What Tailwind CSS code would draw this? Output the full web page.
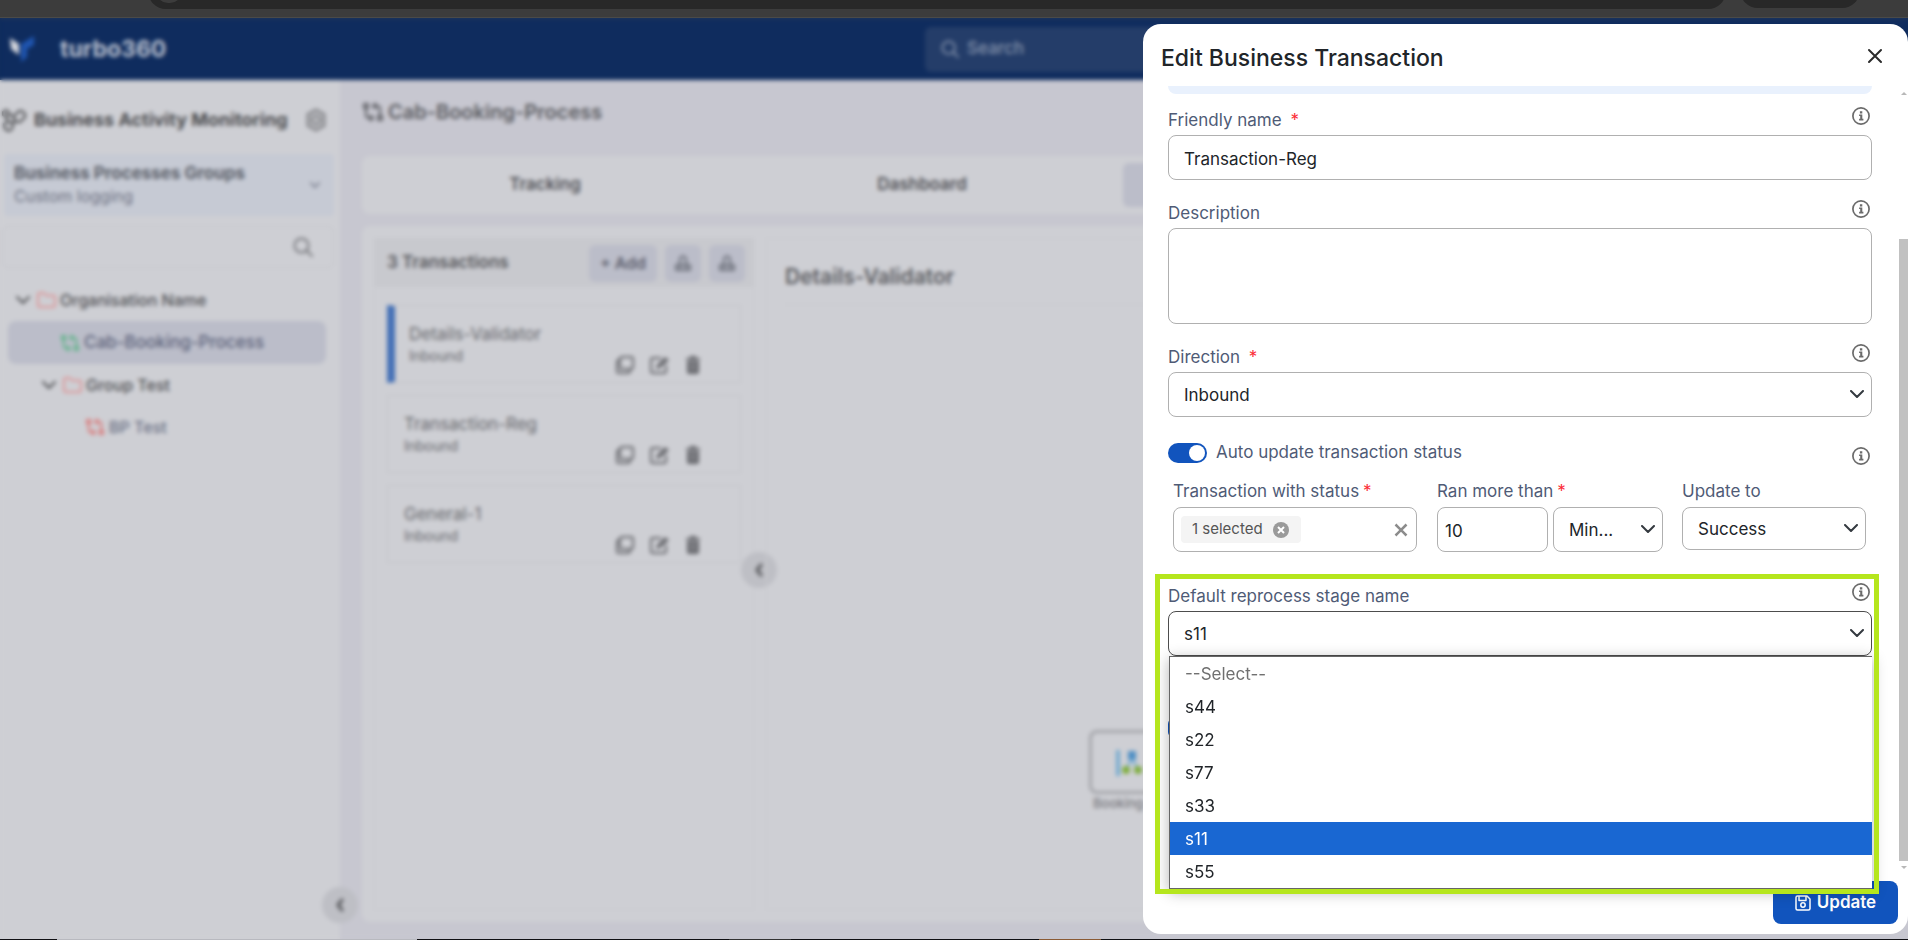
<!DOCTYPE html>
<html lang="en">
<head>
<meta charset="utf-8">
<title>turbo360 - Edit Business Transaction</title>
<script src="https://cdn.jsdelivr.net/npm/@tailwindcss/browser@4"></script>
</head>
<body class="h-screen overflow-hidden flex flex-col bg-[#c7c7d0] font-['Inter',sans-serif] text-[#212529]">

<svg class="hidden" aria-hidden="true">
  <symbol id="process" viewBox="0 0 22 20" fill="none" stroke="currentColor" stroke-width="2" stroke-linejoin="round">
    <path d="M2 2h4v4H2zM16 14h4v4h-4zM4 6v7a3 3 0 0 0 3 3h4M8 13l3 3-3 3M18 14V7a3 3 0 0 0-3-3h-4M14 1l-3 3 3 3"/>
  </symbol>
  <symbol id="folder" viewBox="0 0 20 16" fill="none" stroke="currentColor" stroke-width="2" stroke-linejoin="round">
    <path d="M2 3a2 2 0 0 1 2-2h4l2 2.500h7a2 2 0 0 1 2 2V13a2 2 0 0 1-2 2H4a2 2 0 0 1-2-2z"/>
  </symbol>
  <symbol id="search" viewBox="0 0 20 20" fill="none" stroke="currentColor" stroke-width="2" stroke-linecap="round">
    <circle cx="8.500" cy="8.500" r="7"/><path d="M13.500 13.500l5.500 5.500"/>
  </symbol>
  <symbol id="chevron" viewBox="0 0 14 8" fill="none" stroke="currentColor" stroke-width="2" stroke-linecap="round" stroke-linejoin="round">
    <path d="M1 1l6 6 6-6"/>
  </symbol>
  <symbol id="chevron-left" viewBox="0 0 8 14" fill="none" stroke="currentColor" stroke-width="3" stroke-linecap="round" stroke-linejoin="round">
    <path d="M6 2L2 7l4 5"/>
  </symbol>
  <symbol id="info" viewBox="0 0 18 18">
    <circle cx="9" cy="9" r="8.100" fill="none" stroke="currentColor" stroke-width="1.700"/>
    <path fill="currentColor" d="M7.900 4.300h2.400v2.200H7.900zM7.100 7.400h3.200v4.300h1.100v1.700H7.100v-1.700h1.100V9.100H7.100z"/>
  </symbol>
  <symbol id="copy" viewBox="0 0 18 18" fill="none" stroke="currentColor" stroke-width="2" stroke-linejoin="round">
    <rect x="4" y="1" width="13" height="12" rx="2"/><path d="M4 4H3a2 2 0 0 0-2 2v9a2 2 0 0 0 2 2h9a2 2 0 0 0 2-2v-1"/>
  </symbol>
  <symbol id="edit" viewBox="0 0 20 18" fill="none" stroke="currentColor" stroke-width="2" stroke-linejoin="round">
    <path d="M11 2H3a2 2 0 0 0-2 2v11a2 2 0 0 0 2 2h11a2 2 0 0 0 2-2V9"/><path d="M6 13l1-4 8-8 4 3-9 8z" fill="currentColor" stroke="none"/>
  </symbol>
  <symbol id="trash" viewBox="0 0 14 18">
    <path d="M4 0h6v2h4v2H0V2h4zM1 5h12v11a2 2 0 0 1-2 2H3a2 2 0 0 1-2-2z" fill="currentColor"/><path d="M5 7v8M9 7v8" stroke="#b4b5ba" stroke-width="1"/>
  </symbol>
  <symbol id="stack" viewBox="0 0 16 16" fill="none" stroke="currentColor" stroke-width="2" stroke-linejoin="round">
    <path d="M5 9V3l3-2 3 2v6M1 10h14v5H1zM5 10v5M11 10v5"/>
  </symbol>
</svg>

<!-- Browser chrome -->
<div class="h-[18px] shrink-0 bg-[#3c3c3c] border-b border-[#4a4a48] flex items-start overflow-hidden">
  <div class="ml-[148px] mr-[182px] flex-1 h-[9px] overflow-hidden flex flex-col justify-end">
    <div class="h-9 shrink-0 rounded-full bg-[#282828] flex items-center pl-2"><div class="w-[26px] h-6 rounded-full bg-[#3c3c3c]"></div></div>
  </div>
  <div class="-ml-[168px] mr-[48px] w-[120px] h-2 overflow-hidden flex flex-col justify-end"><div class="h-9 shrink-0 rounded-full bg-[#282828]"></div></div>
</div>

<div class="relative flex-1 min-h-0 flex flex-col">
  <header class="h-[62px] shrink-0 bg-[#0f2c5e] flex items-center">
    <svg class="ml-2 w-7 h-7" viewBox="0 0 26 28"><path d="M1 3l9 6v11L2 14z" fill="#d5d7dd"/><path d="M25 1L12 9v18l6-5v-8l7-4z" fill="#1f55b0"/></svg>
    <span class="ml-6 text-[23px] font-bold text-[#b9c0cf]">turbo360</span>
    <label class="ml-auto mr-[600px] w-[383px] h-[45px] rounded-md bg-[#243d69] flex items-center gap-2 px-4 text-[#8593ac]">
      <svg class="w-[18px] h-[18px]"><use href="#search"/></svg>
      <input type="search" aria-label="Search" placeholder="Search" class="w-40 text-[17px] font-medium placeholder:text-[#8593ac] bg-transparent">
    </label>
  </header>

  <div class="flex-1 min-h-0 flex">
    <aside class="relative w-[340px] shrink-0 bg-[#cecfd4] pt-5">
      <div class="flex items-center h-10 pl-0.5 pr-3">
        <svg class="w-6 h-6 text-[#4c4d50]" viewBox="0 0 24 24" fill="none" stroke="currentColor" stroke-width="2" stroke-linejoin="round"><path d="M12 8l5-5h3l3 3v3l-5 5h-3l-3-3zM2 16l3-2h4l2 3-1 4-3 2-4-2zM1 4l3-2 3 2v3L4 9 1 7zM7 6l5 3M13 13l-3 3M4 9l2 5"/></svg>
        <h2 class="ml-2 text-lg font-bold text-[#4c4d50] whitespace-nowrap">Business Activity Monitoring</h2>
        <button aria-label="Settings" class="ml-auto w-6 h-6 text-[#88898d]"><svg class="w-6 h-6" viewBox="0 0 24 24" fill="none" stroke="currentColor" stroke-width="3"><path d="M12 2l8 4.500v11L12 22l-8-4.500v-11z"/><circle cx="12" cy="12" r="4"/></svg></button>
      </div>
      <button class="mt-3.5 ml-1 w-[330px] h-[62px] rounded bg-[#c6cad4] flex items-center justify-between px-2.5 text-left">
        <span class="flex flex-col leading-[22px]"><span class="text-[17px] font-bold text-[#5a5e68]">Business Processes Groups</span><span class="text-base text-[#6c7080]">Custom logging</span></span>
        <svg class="w-2.5 h-1.5 mr-1 text-[#6c7080]"><use href="#chevron"/></svg>
      </button>
      <label class="mt-2.5 ml-0.5 w-[332px] h-[42px] rounded-md border border-[#c5c6cb] flex items-center justify-end pr-5 text-[#77787d]">
        <input type="search" aria-label="Filter processes" class="flex-1 min-w-0 bg-transparent"><svg class="w-5 h-5"><use href="#search"/></svg>
      </label>
      <nav class="mt-2.5 text-base font-medium text-[#4e4f53]">
        <a href="#" class="flex items-center h-[43px] pl-4"><svg class="w-3.5 h-2"><use href="#chevron"/></svg><svg class="ml-1.5 w-5 h-4 text-[#dc9799]"><use href="#folder"/></svg><span class="ml-1">Organisation Name</span></a>
        <a href="#" class="flex items-center h-[43px] mx-2 mr-3.5 pl-[52px] rounded-lg bg-[#bbbdc9] text-[17px] text-[#5a6078]"><svg class="w-5 h-[18px] text-[#5eb388]"><use href="#process"/></svg><span class="ml-1">Cab-Booking-Process</span></a>
        <a href="#" class="flex items-center h-[42px] pl-[42px]"><svg class="w-3.5 h-2"><use href="#chevron"/></svg><svg class="ml-1.5 w-5 h-4 text-[#dc9799]"><use href="#folder"/></svg><span class="ml-1">Group Test</span></a>
        <a href="#" class="flex items-center h-[42px] pl-[85px] text-[#6a7084]"><svg class="w-5 h-[18px] text-[#da7676]"><use href="#process"/></svg><span class="ml-1">BP Test</span></a>
      </nav>
      <button aria-label="Collapse sidebar" class="absolute -right-[18px] bottom-4 w-9 h-9 rounded-full bg-[#bebfc5] grid place-items-center text-[#55565a]"><svg class="w-2 h-3.5"><use href="#chevron-left"/></svg></button>
    </aside>

    <main class="flex-1 min-w-0 flex flex-col pl-[22px] pb-[17px]">
      <h1 class="h-[76px] pb-3 flex items-center gap-1 text-xl font-semibold text-[#5a5b60]"><svg class="w-[22px] h-5"><use href="#process"/></svg>Cab-Booking-Process</h1>
      <div class="h-[58px] shrink-0 rounded-lg bg-[#cecfd4] flex items-center text-[17px] font-semibold text-[#505156]">
        <button class="w-[366px]">Tracking</button>
        <button class="w-[388px]">Dashboard</button>
        <button class="ml-[7px] w-[384px] h-11 rounded-md bg-[#bbbdc9]">Transactions</button>
      </div>
      <div class="mt-3 flex-1 min-h-0 rounded-lg bg-[#cecfd4] p-3 flex gap-3">
        <section class="relative w-[380px] shrink-0 border border-[#c8c9ce]">
          <div class="h-12 bg-[#c8c9ce] flex items-center gap-2 pl-3 pr-2">
            <h2 class="mr-auto text-[17px] font-semibold text-[#55565a]">3 Transactions</h2>
            <button class="w-[68px] h-[37px] rounded-md bg-[#bbbdc9] text-base font-semibold text-[#5b5e6c] whitespace-nowrap">+ Add</button>
            <button aria-label="Import" class="w-9 h-[37px] rounded-md bg-[#bbbdc9] grid place-items-center text-[#6c6f7a]"><svg class="w-4 h-4"><use href="#stack"/></svg></button>
            <button aria-label="Export" class="w-9 h-[37px] rounded-md bg-[#bbbdc9] grid place-items-center text-[#6c6f7a]"><svg class="w-4 h-4"><use href="#stack"/></svg></button>
          </div>
          <div class="pt-[18px] px-3 flex flex-col gap-3 text-[#66676c]">
            <article class="relative h-[78px] border border-l-8 border-[#c4c5ca] border-l-[#4470b6] pt-4 pl-3.5"><h3 class="text-[17px] leading-6">Details-Validator</h3><p class="text-sm leading-5">Inbound</p><div class="absolute right-10 bottom-2 flex gap-4"><svg class="w-[18px] h-[18px]"><use href="#copy"/></svg><svg class="w-5 h-[18px]"><use href="#edit"/></svg><svg class="w-3.5 h-[18px]"><use href="#trash"/></svg></div></article>
            <article class="relative h-[78px] border border-[#c4c5ca] pt-4 pl-4"><h3 class="text-[17px] leading-6">Transaction-Reg</h3><p class="text-sm leading-5">Inbound</p><div class="absolute right-10 bottom-2 flex gap-4"><svg class="w-[18px] h-[18px]"><use href="#copy"/></svg><svg class="w-5 h-[18px]"><use href="#edit"/></svg><svg class="w-3.5 h-[18px]"><use href="#trash"/></svg></div></article>
            <article class="relative h-[78px] border border-[#c4c5ca] pt-4 pl-4"><h3 class="text-[17px] leading-6">General-1</h3><p class="text-sm leading-5">Inbound</p><div class="absolute right-10 bottom-2 flex gap-4"><svg class="w-[18px] h-[18px]"><use href="#copy"/></svg><svg class="w-5 h-[18px]"><use href="#edit"/></svg><svg class="w-3.5 h-[18px]"><use href="#trash"/></svg></div></article>
          </div>
          <button aria-label="Collapse list" class="absolute -right-6 top-[313px] w-9 h-9 rounded-full bg-[#bebfc5] grid place-items-center text-[#55565a]"><svg class="w-2 h-3.5"><use href="#chevron-left"/></svg></button>
        </section>
        <section class="relative flex-1 min-w-0 border border-[#c8c9ce] px-[18px]">
          <h2 class="h-[66px] pt-6 border-b border-[#c8c9ce] text-[21px] leading-7 font-semibold text-[#5a5b60]">Details-Validator</h2>
          <div class="absolute left-[322px] top-[491px] w-[90px] text-[13px] font-medium text-[#77787c]">
            <div class="h-16 border-3 border-[#a4a5aa] rounded-lg pl-6 pt-4"><svg class="w-8 h-7" viewBox="0 0 32 28"><path d="M2 1v26" stroke="#5a9fcf" stroke-width="3"/><path d="M12 2h8v9h-8z" fill="#4f8fc4"/><path d="M16 10l-5 8M16 10l5 8" stroke="#6fa9d0" stroke-width="2"/><circle cx="10" cy="21" r="4" fill="#7fae3e"/><circle cx="22" cy="21" r="4" fill="#7fae3e"/></svg></div>
            <p class="pl-1 whitespace-nowrap">Booking-stage</p>
          </div>
        </section>
      </div>
    </main>
  </div>

  <!-- Blurred backdrop -->
  <div class="absolute inset-0 backdrop-blur-[2px]"></div>

  <!-- Drawer -->
  <div role="dialog" aria-labelledby="drawer-title" class="absolute right-0 top-1.5 bottom-[5px] w-[765px] max-w-full rounded-[18px] bg-white flex flex-col">
    <div class="h-[62px] shrink-0 flex items-center justify-between pl-[18px] pr-[25px]">
      <h2 id="drawer-title" class="text-[23px] leading-8 pt-1.5 font-medium">Edit Business Transaction</h2>
      <button aria-label="Close" class="text-[#2b2b2b]"><svg class="w-4 h-4 mt-0.5" viewBox="0 0 16 16" fill="none" stroke="currentColor" stroke-width="2" stroke-linecap="round"><path d="M2 2l12 12M14 2L2 14"/></svg></button>
    </div>

    <div class="relative z-10 flex-1 min-h-0 flex">
      <form class="flex-1 min-w-0 pl-[25px] pr-9 text-[17px]">
        <div class="h-2 rounded-b-lg bg-[#e9f1fd]"></div>

        <div class="mt-[13px]">
          <div class="flex justify-between mb-1 h-6 leading-[26px] text-[#4f5b76]"><label for="fname">Friendly name <span class="ml-1 text-red-500">*</span></label><svg class="w-[18px] h-[18px] mr-0.5 text-[#6b6b6b]"><use href="#info"/></svg></div>
          <input id="fname" value="Transaction-Reg" class="block w-full h-[45px] rounded-lg border border-[#b0b0b0] px-[15px] pt-0.5">
        </div>

        <div class="mt-5">
          <div class="flex justify-between mb-1 h-6 leading-[26px] text-[#4f5b76]"><label for="desc">Description</label><svg class="w-[18px] h-[18px] mr-0.5 text-[#6b6b6b]"><use href="#info"/></svg></div>
          <textarea id="desc" class="block w-full h-24 resize-none rounded-lg border border-[#b0b0b0] px-[15px] py-2"></textarea>
        </div>

        <div class="mt-5">
          <div class="flex justify-between mb-1 h-6 leading-[26px] text-[#4f5b76]"><label for="dir">Direction <span class="ml-1 text-red-500">*</span></label><svg class="w-[18px] h-[18px] mr-0.5 text-[#6b6b6b]"><use href="#info"/></svg></div>
          <div class="relative">
            <select id="dir" class="block appearance-none w-full h-[45px] rounded-lg border border-[#b0b0b0] px-[15px] pt-0.5 bg-white"><option>Inbound</option></select>
            <svg class="absolute right-2 top-[18px] w-3.5 h-2 text-[#343a40] pointer-events-none"><use href="#chevron"/></svg>
          </div>
        </div>

        <div class="mt-6 h-6 flex items-center text-[#4f5b76]">
          <input id="auto" type="checkbox" role="switch" checked class="appearance-none w-[39px] h-5 rounded-full bg-[#1154bd] flex items-center justify-end pr-0.5 before:content-[''] before:w-4 before:h-4 before:rounded-full before:bg-white">
          <label for="auto" class="ml-[9px]">Auto update transaction status</label>
          <svg class="w-[18px] h-[18px] mt-1.5 ml-auto mr-0.5 text-[#6b6b6b]"><use href="#info"/></svg>
        </div>

        <div class="mt-3.5 pl-[5px] pr-1.5 flex">
          <div class="flex-1 min-w-0">
            <label for="clear" class="block mb-1 leading-6 text-[#4f5b76] whitespace-nowrap">Transaction with status<span class="ml-1 text-red-500">*</span></label>
            <div class="h-[45px] rounded-lg border border-[#b0b0b0] flex items-center justify-between pl-[7px] pr-2">
              <span class="h-[27px] rounded-sm bg-[#f4f4f4] flex items-center gap-2.5 pl-[11px] pr-3 text-[15px] text-[#555]">1 selected
                <button type="button" aria-label="Remove"><svg class="w-4 h-4" viewBox="0 0 16 16"><circle cx="8" cy="8" r="8" fill="#9a9a9a"/><path d="M5 5l6 6M11 5l-6 6" stroke="#fff" stroke-width="2"/></svg></button></span>
              <button id="clear" type="button" aria-label="Clear selection"><svg class="w-3.5 h-3.5" viewBox="0 0 14 14"><path d="M1.500 1.500l11 11M12.500 1.500l-11 11" stroke="#8c8c8c" stroke-width="2.500"/></svg></button>
            </div>
          </div>
          <div class="ml-5 w-[226px]">
            <label for="ran" class="block mb-1 leading-6 text-[#4f5b76]">Ran more than<span class="ml-1 text-red-500">*</span></label>
            <div class="flex gap-[5px]">
              <input id="ran" value="10" class="w-[111px] h-[45px] rounded-lg border border-[#b0b0b0] px-[7px] pt-0.5">
              <div class="relative flex-1">
                <select aria-label="Time unit" class="block appearance-none w-full h-[45px] rounded-lg border border-[#b0b0b0] px-[15px] pt-0.5 bg-white"><option>Min...</option></select>
                <svg class="absolute right-2 top-[18px] w-3.5 h-2 text-[#343a40] pointer-events-none"><use href="#chevron"/></svg>
              </div>
            </div>
          </div>
          <div class="ml-[19px] w-[184px]">
            <label for="upd" class="block mb-1 leading-6 text-[#4f5b76]">Update to</label>
            <div class="relative">
              <select id="upd" class="block appearance-none w-full h-[43px] rounded-lg border border-[#b0b0b0] px-[15px] pt-0.5 bg-white"><option>Success</option></select>
              <svg class="absolute right-2 top-[17px] w-3.5 h-2 text-[#343a40] pointer-events-none"><use href="#chevron"/></svg>
            </div>
          </div>
        </div>

        <div class="relative mt-[31px]">
          <div class="flex justify-between mb-1 h-6 leading-[26px] text-[#4f5b76]"><label for="stage">Default reprocess stage name</label><svg class="w-[18px] h-[18px] mr-0.5 text-[#6b6b6b]"><use href="#info"/></svg></div>
          <div class="relative">
            <select id="stage" class="block appearance-none w-full h-[45px] rounded-lg border border-[#4d4d4d] px-[15px] pt-0.5 bg-white"><option>s11</option></select>
            <svg class="absolute right-2 top-[18px] w-3.5 h-2 text-[#343a40] pointer-events-none"><use href="#chevron"/></svg>
          </div>
          <ul role="listbox" aria-label="Default reprocess stage name" class="absolute z-10 left-px right-0 top-[73px] border border-[#666] border-r-0 bg-white leading-8 shadow-[0_3px_14px_rgba(0,0,0,0.3)]">
            <li role="option" class="px-[15px] pt-px text-[#707070]">--Select--</li>
            <li role="option" class="px-[15px] pt-px">s44</li>
            <li role="option" class="px-[15px] pt-px">s22</li>
            <li role="option" class="px-[15px] pt-px">s77</li>
            <li role="option" class="px-[15px] pt-px">s33</li>
            <li role="option" aria-selected="true" class="px-[15px] pt-px bg-[#1967d2] text-white">s11</li>
            <li role="option" class="px-[15px] pt-px">s55</li>
          </ul>
          <div class="absolute z-20 -left-[13px] -right-[7px] -top-[9px] h-[320px] border-5 border-[#b5e61d] pointer-events-none"></div>
        </div>
        <input type="checkbox" role="switch" checked aria-label="Enable reprocessing" class="block appearance-none mt-[62px] w-[39px] h-5 rounded-md bg-[#1154bd]">
      </form>
      <div class="absolute right-0 top-0 h-full w-[9px] flex flex-col items-center pt-1.5 pb-0.5">
        <div class="border-x-[3px] border-x-transparent border-b-[3px] border-b-[#b8b8b8]"></div>
        <div class="mt-36 mb-[5px] w-full flex-1 bg-[#c1c1c1]"></div>
        <div class="border-x-[3px] border-x-transparent border-t-[3px] border-t-[#b8b8b8]"></div>
      </div>
    </div>

    <div class="h-[63px] shrink-0 flex justify-end pt-2.5 pr-2.5">
      <button class="w-[125px] h-[43px] rounded-lg bg-[#1154bd] text-white text-[17px] font-semibold flex items-center justify-center gap-1.5">
        <svg class="w-4 h-4" viewBox="0 0 16 16" fill="none" stroke="currentColor" stroke-width="1.500" stroke-linejoin="round"><path d="M1 2.500A1.500 1.500 0 0 1 2.500 1H12l3 3v9.500a1.500 1.500 0 0 1-1.500 1.500h-11A1.500 1.500 0 0 1 1 13.500zM4 1v4.500h7V1"/><circle cx="8" cy="10" r="2.200"/></svg>Update</button>
    </div>
  </div>
</div>

<!-- Taskbar edge -->
<div class="h-px shrink-0 bg-[#101014] flex"><div class="ml-[57px] w-[360px] bg-[#b8b9bf]"></div><div class="ml-[312px] w-[62px] bg-[#333]"></div><div class="ml-[248px] w-[62px] bg-[#8a5a34]"></div></div>
</body>
</html>
